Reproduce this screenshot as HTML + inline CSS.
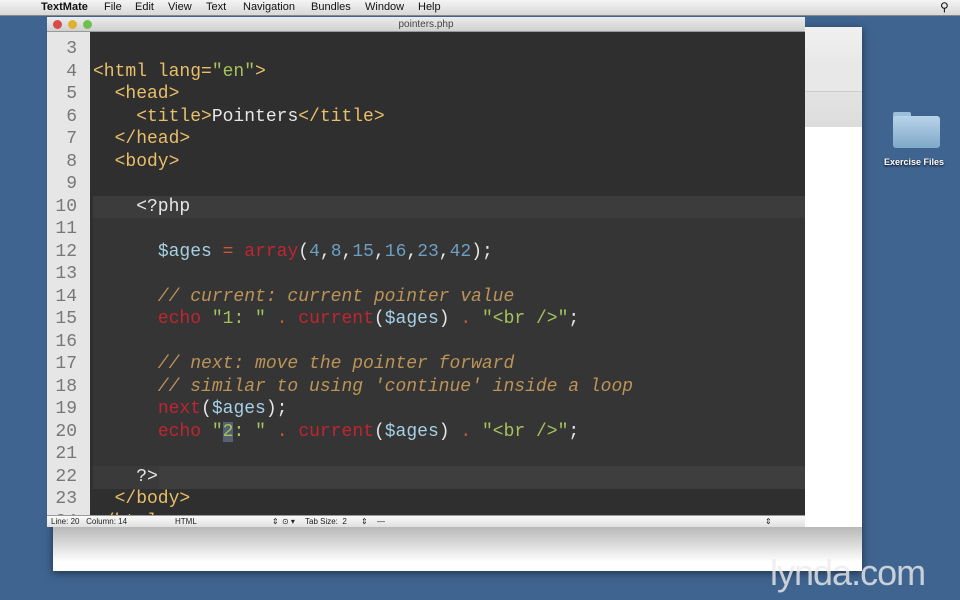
<!DOCTYPE html>
<html><head><meta charset="utf-8"><style>
*{margin:0;padding:0;box-sizing:border-box}
body{width:960px;height:600px;overflow:hidden;background:#3f6490;font-family:"Liberation Sans",sans-serif;position:relative}
.menu{position:absolute;left:0;top:0;width:960px;height:16px;background:linear-gradient(#f4f4f4,#d8d8d8);border-bottom:1px solid #888;font-size:11px;color:#111}
.menu span{position:absolute;top:1px}
.bg{position:absolute;left:53px;top:27px;width:809px;height:544px;background:#fff;box-shadow:0 2px 8px rgba(0,0,0,.5)}
.bgtop{position:absolute;left:805px;top:27px;width:57px;height:100px;background:linear-gradient(#f0f0f0,#dcdcdc)}
.bgrow{position:absolute;left:805px;top:62px;width:57px;height:30px;background:#e8e8e8;border-bottom:1px solid #ccc}
.bgshadow{position:absolute;left:53px;top:527px;width:809px;height:44px;background:linear-gradient(#b8b8b8,#fff 80%)}
.win{position:absolute;left:47px;top:17px;width:758px;height:510px;background:#2f2f2f}
.title{position:absolute;left:0;top:0;width:758px;height:15px;background:linear-gradient(#ececec,#d0d0d0);font-size:10px;color:#444;text-align:center;line-height:15px;border-bottom:1px solid #999}
.dot{position:absolute;top:3px;width:9px;height:9px;border-radius:50%}
.code{position:absolute;left:0;top:15px;width:758px;height:483px;overflow:hidden}
.in{position:absolute;left:0;top:-13px;width:758px;height:520px}
.gut{position:absolute;left:0;top:0;width:43px;height:520px;background:#e6e6e6}
.php{position:absolute;left:46px;top:177px;width:712px;height:293px;background:#353535}
.l10{position:absolute;left:46px;top:177px;width:712px;height:22px;background:#3c3c3c}
.l22{position:absolute;left:46px;top:447px;width:66px;height:23px;background:#3a3a3a}
.l22b{position:absolute;left:112px;top:447px;width:646px;height:23px;background:#3e3e3e}
.ln{position:absolute;left:0;width:30px;text-align:right;font:18px "Liberation Mono",monospace;color:#777}
.tx{position:absolute;left:46px;font:18px "Liberation Mono",monospace;color:#e6e6e6;white-space:pre}
.t{color:#e8bf6a}.s{color:#a5c25c}.k{color:#c02530}.v{color:#a6d0e4}.n{color:#6e9ec0}.c{color:#bc9458;font-style:italic}.o{color:#cc5533}
.status{position:absolute;left:0;top:498px;width:758px;height:12px;background:linear-gradient(#fafafa,#e0e0e0);font-size:8px;color:#222;border-top:1px solid #999}
.status span{position:absolute;top:1px}
</style></head><body>
<div class="menu">
<span style="left:14px;font-size:13px;top:-1px"></span>
<span style="left:41px;font-weight:bold">TextMate</span>
<span style="left:104px">File</span><span style="left:135px">Edit</span><span style="left:168px">View</span>
<span style="left:206px">Text</span><span style="left:243px">Navigation</span><span style="left:311px">Bundles</span>
<span style="left:365px">Window</span><span style="left:418px">Help</span>
<span style="left:940px;font-size:12px;top:0">&#9906;</span>
</div>
<div class="bg"></div><div class="bgtop"></div><div class="bgrow"></div><div class="bgshadow"></div>
<div style="position:absolute;left:893px;top:112px;width:18px;height:6px;background:#9cc0dc;border-radius:2px 2px 0 0"></div>
<div style="position:absolute;left:893px;top:116px;width:47px;height:32px;background:linear-gradient(#b8d4ea,#7fa8c8);border-radius:3px"></div>
<div style="position:absolute;left:884px;top:157px;font-size:9px;font-weight:bold;color:#fff;text-shadow:0 1px 2px #000">Exercise Files</div>
<div style="position:absolute;left:770px;top:552px;font-size:36px;color:rgba(235,235,235,.8);letter-spacing:-1px">lynda.com</div>
<div class="win">
<div class="title"><div class="dot" style="left:6px;background:#d84a4a"></div><div class="dot" style="left:21px;background:#e0b030"></div><div class="dot" style="left:36px;background:#70c050"></div>pointers.php</div>
<div class="code"><div class="in">
<div class="gut"></div>
<div class="php"></div><div class="l10"></div><div class="l22"></div><div class="l22b"></div>
<div class="ln" style="top:20px">3</div><div class="ln" style="top:43px">4</div><div class="ln" style="top:65px">5</div><div class="ln" style="top:88px">6</div><div class="ln" style="top:110px">7</div><div class="ln" style="top:133px">8</div><div class="ln" style="top:155px">9</div><div class="ln" style="top:178px">10</div><div class="ln" style="top:200px">11</div><div class="ln" style="top:223px">12</div><div class="ln" style="top:245px">13</div><div class="ln" style="top:268px">14</div><div class="ln" style="top:290px">15</div><div class="ln" style="top:313px">16</div><div class="ln" style="top:335px">17</div><div class="ln" style="top:358px">18</div><div class="ln" style="top:380px">19</div><div class="ln" style="top:403px">20</div><div class="ln" style="top:425px">21</div><div class="ln" style="top:448px">22</div><div class="ln" style="top:470px">23</div><div class="ln" style="top:493px">24</div>
<div class="tx" style="top:43px"><span class="t">&lt;html lang=</span><span class="s">"en"</span><span class="t">&gt;</span></div>
<div class="tx" style="top:65px"><span class="t">  &lt;head&gt;</span></div>
<div class="tx" style="top:88px"><span class="t">    &lt;title&gt;</span>Pointers<span class="t">&lt;/title&gt;</span></div>
<div class="tx" style="top:110px"><span class="t">  &lt;/head&gt;</span></div>
<div class="tx" style="top:133px"><span class="t">  &lt;body&gt;</span></div>
<div class="tx" style="top:178px">    &lt;?php</div>
<div class="tx" style="top:223px">      <span class="v">$ages</span> <span class="o">=</span> <span class="k">array</span>(<span class="n">4</span>,<span class="n">8</span>,<span class="n">15</span>,<span class="n">16</span>,<span class="n">23</span>,<span class="n">42</span>);</div>
<div class="tx" style="top:268px"><span class="c">      // current: current pointer value</span></div>
<div class="tx" style="top:290px">      <span class="k">echo</span> <span class="s">"1: "</span> <span class="o">.</span> <span class="k">current</span>(<span class="v">$ages</span>) <span class="o">.</span> <span class="s">"&lt;br /&gt;"</span>;</div>
<div class="tx" style="top:335px"><span class="c">      // next: move the pointer forward</span></div>
<div class="tx" style="top:358px"><span class="c">      // similar to using 'continue' inside a loop</span></div>
<div class="tx" style="top:380px">      <span class="k">next</span>(<span class="v">$ages</span>);</div>
<div class="tx" style="top:403px">      <span class="k">echo</span> <span class="s">"<span style="background:#556070">2</span>: "</span> <span class="o">.</span> <span class="k">current</span>(<span class="v">$ages</span>) <span class="o">.</span> <span class="s">"&lt;br /&gt;"</span>;</div>
<div class="tx" style="top:448px">    ?&gt;</div>
<div class="tx" style="top:470px"><span class="t">  &lt;/body&gt;</span></div>
<div class="tx" style="top:493px"><span class="t">&lt;/html&gt;</span></div>
</div></div>
<div class="status"><span style="left:4px">Line: 20 &nbsp; Column: 14</span><span style="left:128px">HTML</span><span style="left:225px">⇕</span><span style="left:235px">⊙ ▾</span><span style="left:258px">Tab Size: &nbsp;2</span><span style="left:314px">⇕</span><span style="left:330px">—</span><span style="left:718px">⇕</span></div>
</div>
</body></html>
